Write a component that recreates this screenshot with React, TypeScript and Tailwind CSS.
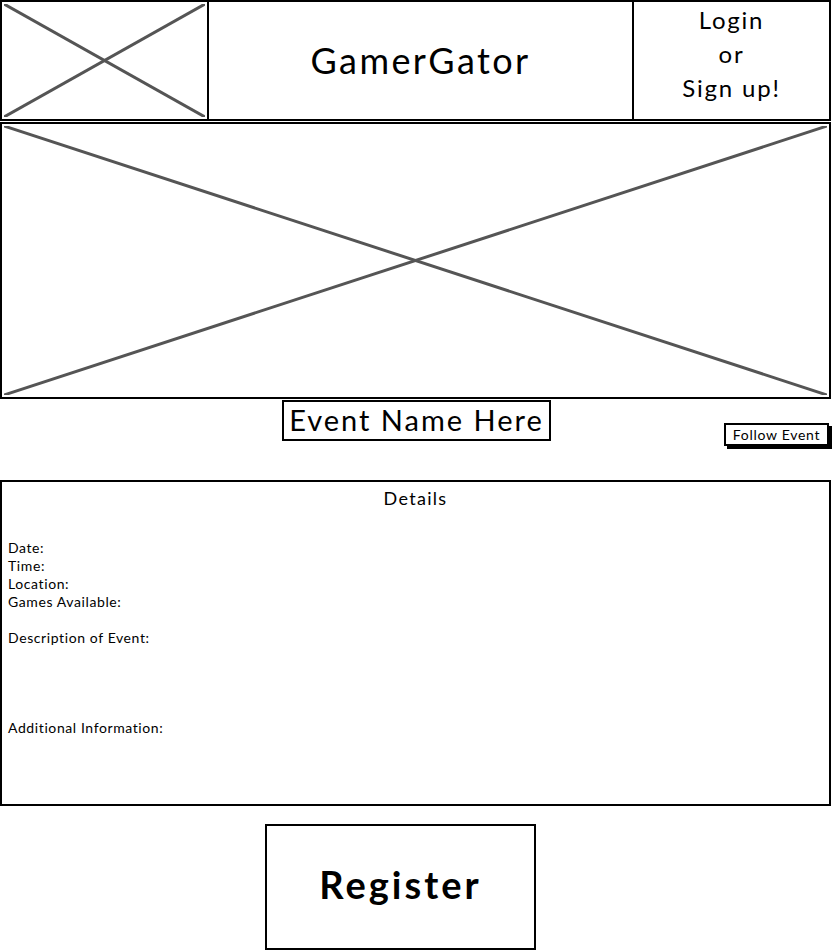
import React from "react";

const XBox = () => (
  <svg viewBox="0 0 100 100" preserveAspectRatio="none" width="100%" height="100%">
    <line x1="0" y1="0" x2="100" y2="100" stroke="#555" strokeWidth="3" vectorEffect="non-scaling-stroke" />
    <line x1="0" y1="100" x2="100" y2="0" stroke="#555" strokeWidth="3" vectorEffect="non-scaling-stroke" />
  </svg>
);

export default function App() {
  const font = "font-['Lato','Open_Sans',sans-serif]";
  return (
    <div className={`w-[832px] h-[951px] bg-white text-black ${font}`}>
      {/* Header */}
      <div className="flex w-[831px] h-[121px] border-2 border-black">
        <div className="w-[207px] h-full border-r-2 border-black p-[2px]">
          <XBox />
        </div>
        <div className="flex-1 flex items-center justify-center text-[36px] tracking-[2.4px] pb-[2px]">GamerGator</div>
        <div className="w-[197px] h-full border-l-2 border-black flex flex-col items-center justify-center text-[24px] leading-[34px] tracking-[1.8px] pb-[14px]">
          <span>Login</span>
          <span>or</span>
          <span>Sign up!</span>
        </div>
      </div>
      {/* Hero */}
      <div className="w-[831px] h-[277px] border-2 border-black p-[2px] mt-[1px]">
        <XBox />
      </div>
      {/* Event name row */}
      <div className="relative h-[81px]">
        <div className="absolute left-[282px] top-[1px] w-[269px] h-[41px] border-2 border-black flex items-center justify-center text-[29px] tracking-[2px] pb-[2px]">
          Event Name Here
        </div>
        <div className="absolute left-[724px] top-[24px] w-[105px] h-[23px] border-2 border-black bg-white shadow-[3px_3px_0_0_#000] flex items-center justify-center text-[14px] tracking-[0.7px]">
          Follow Event
        </div>
      </div>
      {/* Details */}
      <div className="w-[831px] h-[326px] border-2 border-black px-[6px]">
        <div className="text-center text-[18px] mt-[4px] leading-[24px] tracking-[1.3px]">Details</div>
        <div className="mt-[29px] text-[14px] leading-[18px] tracking-[0.6px]">
          <div>Date:</div>
          <div>Time:</div>
          <div>Location:</div>
          <div>Games Available:</div>
          <div className="mt-[18px]">Description of Event:</div>
          <div className="mt-[72px]">Additional Information:</div>
        </div>
      </div>
      {/* Register */}
      <div className="flex mt-[18px] ml-[265px]">
        <div className="w-[271px] h-[126px] border-2 border-black flex items-center justify-center text-[38px] font-bold tracking-[3px] pb-[6px]">
          Register
        </div>
      </div>
    </div>
  );
}
